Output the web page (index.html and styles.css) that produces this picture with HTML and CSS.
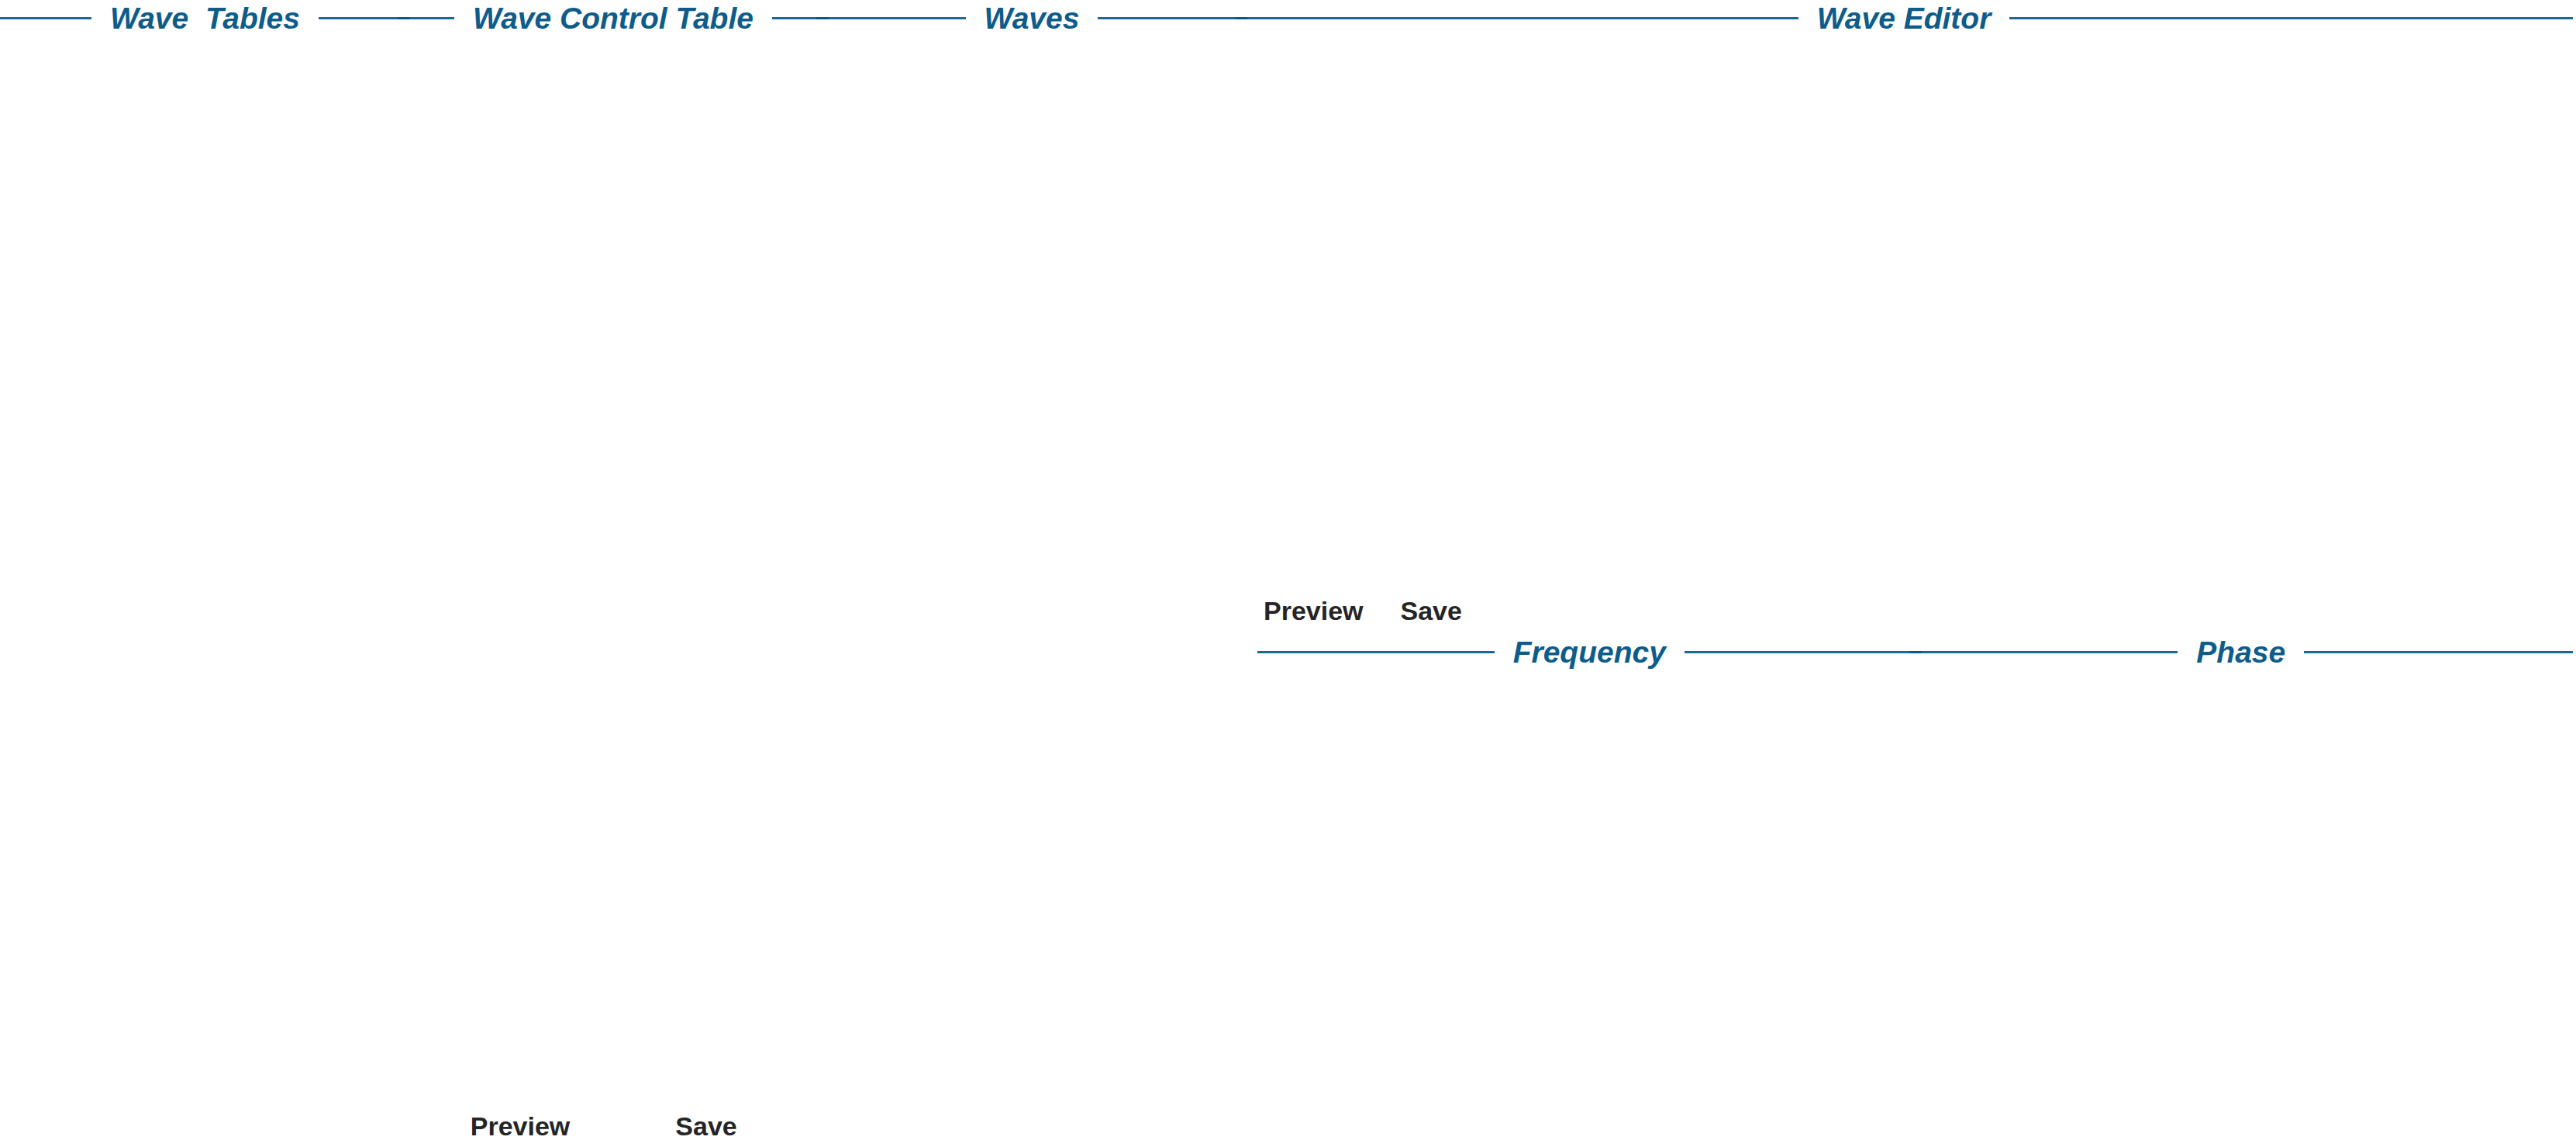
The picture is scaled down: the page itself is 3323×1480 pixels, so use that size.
FILE: index.html
```html
<!DOCTYPE html>
<html lang="en">
<head>
<meta charset="utf-8">
<title>Wave Tables</title>
<link rel="stylesheet" href="styles.css">
</head>
<body>
<div class="app">
  <section class="panel">
    <header class="title"><span>Wave&nbsp; Tables</span></header>
    <div class="panel-body"></div>
  </section>
  <section class="panel">
    <header class="title"><span>Wave Control Table</span></header>
    <div class="panel-body"></div>
    <div class="actions actions-split">
      <button type="button">Preview</button>
      <button type="button">Save</button>
    </div>
  </section>
  <section class="panel">
    <header class="title"><span>Waves</span></header>
    <div class="panel-body"></div>
  </section>
  <section class="panel">
    <header class="title"><span>Wave Editor</span></header>
    <div class="editor-body">
      <div class="editor-canvas"></div>
      <div class="actions actions-inline">
        <button type="button">Preview</button>
        <button type="button">Save</button>
      </div>
      <div class="editor-tabs">
        <section class="panel">
          <header class="title"><span>Frequency</span></header>
          <div class="panel-body"></div>
        </section>
        <section class="panel">
          <header class="title"><span>Phase</span></header>
          <div class="panel-body"></div>
        </section>
      </div>
    </div>
  </section>
</div>
</body>
</html>
```
FILE: styles.css
```css
html, body {
  margin: 0;
  padding: 0;
  background: #ffffff;
}

.app {
  display: grid;
  grid-template-columns: 513px 540px 540px 1fr;
  height: 1480px;
  padding: 0 12px 0 8px;
  box-sizing: border-box;
}

.panel {
  display: flex;
  flex-direction: column;
  min-width: 0;
}

.title {
  display: flex;
  align-items: center;
  gap: 24px;
  height: 47px;
  margin: 0 -8px;
  flex: none;
}

.title::before,
.title::after {
  content: "";
  flex: 1;
  height: 3px;
  background: rgba(8, 86, 134, 0.9);
}

.title span {
  font: italic 700 39px/45px "Liberation Sans", Arial, sans-serif;
  color: #0e5c8a;
  white-space: nowrap;
}

.panel-body {
  flex: 1;
}

.actions {
  display: flex;
}

.actions button {
  font: 700 34px/39px "Liberation Sans", Arial, sans-serif;
  color: #252525;
  background: none;
  border: 0;
  padding: 4px 8px;
  margin: 0;
  cursor: pointer;
}

.actions-split {
  padding: 0 30px 3px;
}

.actions-split button {
  flex: 1;
  text-align: center;
}

.editor-body {
  flex: 1;
  display: flex;
  flex-direction: column;
  padding-left: 29px;
}

.editor-canvas {
  height: 718px;
  flex: none;
}

.actions-inline {
  gap: 32px;
  margin-left: -8px;
}

.editor-tabs {
  flex: 1;
  display: grid;
  grid-template-columns: 1fr 1fr;
  margin-top: 6px;
}
```
